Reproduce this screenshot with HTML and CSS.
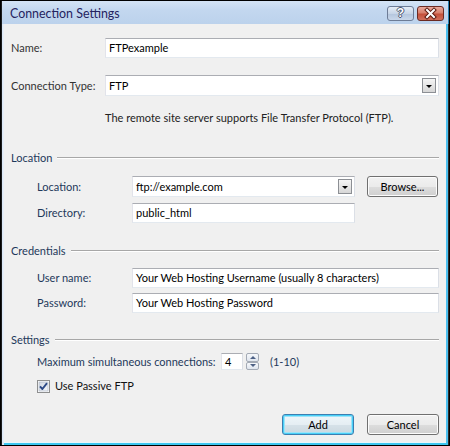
FILE: index.html
```html
<!DOCTYPE html>
<html>
<head>
<meta charset="utf-8">
<title>Connection Settings</title>
<link rel="stylesheet" href="styles.css">
</head>
<body>
<div class="window">
  <div class="titlebar">
    <span class="title">Connection Settings</span>
    <div class="caption-btns">
      <span class="cbtn help">?</span>
      <span class="cbtn close">
        <svg width="25" height="13" viewBox="0 0 25 13">
          <path d="M9 3 L16 10 M16 3 L9 10" stroke="#5a1a10" stroke-width="4" stroke-linecap="square" fill="none"/>
          <path d="M9 3 L16 10 M16 3 L9 10" stroke="#ffffff" stroke-width="2" stroke-linecap="square" fill="none"/>
        </svg>
      </span>
    </div>
  </div>
  <div class="body">
    <div class="client">
      <div class="row top-row">
        <span class="lbl top-lbl">Name:</span>
        <div class="field grow">FTPexample</div>
      </div>
      <div class="row top-row type-row">
        <span class="lbl top-lbl">Connection Type:</span>
        <div class="field combo grow">
          <span>FTP</span>
          <span class="drop"><span class="tri"></span></span>
        </div>
      </div>
      <p class="desc">The remote site server supports File Transfer Protocol (FTP).</p>

      <div class="ghead loc-head">Location</div>
      <div class="row sub-row loc-row">
        <span class="lbl sub-lbl">Location:</span>
        <div class="field combo w223">
          <span>ftp://example.com</span>
          <span class="drop"><span class="tri"></span></span>
        </div>
        <span class="btn browse">Browse...</span>
      </div>
      <div class="row sub-row dir-row">
        <span class="lbl sub-lbl">Directory:</span>
        <div class="field w223">public_html</div>
      </div>

      <div class="ghead cred-head">Credentials</div>
      <div class="row sub-row user-row">
        <span class="lbl sub-lbl">User name:</span>
        <div class="field grow">Your Web Hosting Username (usually 8 characters)</div>
      </div>
      <div class="row sub-row pass-row">
        <span class="lbl sub-lbl">Password:</span>
        <div class="field grow">Your Web Hosting Password</div>
      </div>

      <div class="ghead set-head">Settings</div>
      <div class="row sub-row max-row">
        <span class="lbl sub-lbl max-lbl">Maximum simultaneous connections:</span>
        <div class="field spin-field">4</div>
        <div class="spin">
          <span class="spin-btn"><span class="tri-up"></span></span>
          <span class="spin-btn"><span class="tri-down"></span></span>
        </div>
        <span class="range">(1-10)</span>
      </div>
      <div class="row sub-row chk-row">
        <svg class="chk" width="13" height="13" viewBox="0 0 13 13">
          <defs>
            <linearGradient id="cg" x1="0" y1="0" x2="1" y2="1">
              <stop offset="0" stop-color="#cfd6e0"/>
              <stop offset="1" stop-color="#f6f8fb"/>
            </linearGradient>
          </defs>
          <rect x="0.5" y="0.5" width="12" height="12" fill="#fff" stroke="#8e8f8f"/>
          <rect x="2" y="2" width="9" height="9" fill="url(#cg)" stroke="#a9b3c2" stroke-width="0.6"/>
          <path d="M3 6.3 L5.4 9 L10 3.2" stroke="#2d4a86" stroke-width="1.9" fill="none" stroke-linejoin="round"/>
        </svg>
        <span class="chk-lbl">Use Passive FTP</span>
      </div>

      <div class="row btn-row">
        <span class="btn default">Add</span>
        <span class="btn">Cancel</span>
      </div>
    </div>
  </div>
</div>
</body>
</html>
```

FILE: styles.css
```css
html, body {
  margin: 0;
  padding: 0;
  background: #ffffff;
}

body {
  font-family: Lato, "Liberation Sans", sans-serif;
  font-size: 11px;
  color: #000;
}

.window {
  width: 450px;
  height: 446px;
  box-sizing: border-box;
  border: 1px solid #000;
  display: flex;
  flex-direction: column;
  background: #bfd4ed;
}

.titlebar {
  height: 23px;
  flex: none;
  display: flex;
  justify-content: space-between;
  align-items: flex-start;
  padding: 0 4px 0 8px;
  background: linear-gradient(to bottom, #d4e3f5 0%, #c3d7ef 40%, #bcd2ec 100%);
  border-left: 1px solid #1c1c1c;
  border-right: 1px solid #2a7fb0;
}

.title {
  font-size: 12.4px;
  line-height: 14px;
  margin-top: 6px;
  color: #25235f;
}

.caption-btns {
  display: flex;
  gap: 3px;
  margin-top: 5px;
}

.cbtn {
  width: 27px;
  height: 15px;
  box-sizing: border-box;
  border-radius: 3px;
  display: flex;
  align-items: center;
  justify-content: center;
}

.help {
  border: 1px solid #6d7c96;
  background: linear-gradient(to bottom, #e4ecf6 0%, #c7d5e7 50%, #b3c5dd 51%, #c9d7ea 100%);
  color: #fff;
  font-family: "Liberation Sans", sans-serif;
  font-weight: bold;
  font-size: 12px;
  line-height: 13px;
  text-shadow: 1px 0 0 #4a5670, -1px 0 0 #4a5670, 0 1px 0 #4a5670, 0 -1px 0 #4a5670;
}

.close {
  border: 1px solid #6b2a22;
  background: linear-gradient(to bottom, #e9a99b 0%, #d8806c 45%, #c4503a 55%, #d0705c 100%);
}

.body {
  flex: 1;
  display: flex;
  border-left: 1px solid #1c1c1c;
  border-right: 1px solid #2b2b2b;
  padding: 0 0 0 0;
}

.client {
  flex: 1;
  margin: 0 2px 3px 2px;
  background: #f0f0f0;
  padding: 14px 7px 0 7px;
  box-shadow: -1px 0 0 #e6eef8, 0 1px 0 #e8f7fc;
}

.body {
  background: linear-gradient(to right, #dce8f6 0px, #dce8f6 2px, transparent 2px),
              linear-gradient(to top, #3cc6f0 0px, #3cc6f0 2px, transparent 2px),
              linear-gradient(to left, #4cbfee 0px, #4cbfee 2px, #bfd4ed 2px);
}

.row {
  display: flex;
  align-items: center;
}

.lbl {
  flex: none;
  line-height: 14px;
}

.top-lbl {
  width: 94px;
  color: #333;
}

.sub-row {
  padding-left: 26px;
}

.sub-lbl {
  width: 95px;
  color: #1e395b;
}

.field {
  height: 20px;
  box-sizing: border-box;
  border: 1px solid;
  border-color: #abadb3 #dbdfe6 #e3e9ef #e2e3ea;
  background: #fff;
  padding-left: 3px;
  line-height: 18px;
  white-space: nowrap;
  overflow: hidden;
}

.grow {
  flex: 1;
}

.w223 {
  width: 223px;
  flex: none;
}

.combo {
  height: 21px;
  display: flex;
  align-items: center;
  justify-content: space-between;
  padding-right: 2px;
}

.drop {
  width: 14px;
  height: 15px;
  box-sizing: border-box;
  border: 1px solid #8c8f94;
  background: linear-gradient(to bottom, #f5f5f5 0%, #e6e6e6 50%, #d6d6d6 100%);
  display: flex;
  align-items: center;
  justify-content: center;
}

.tri {
  width: 0;
  height: 0;
  border-left: 3px solid transparent;
  border-right: 3px solid transparent;
  border-top: 3px solid #000;
  margin-top: 1px;
}

.type-row {
  margin-top: 17px;
}

.desc {
  margin: 15px 0 0 0;
  padding-left: 94px;
  line-height: 14px;
  color: #222;
}

.ghead {
  display: flex;
  align-items: center;
  height: 14px;
  line-height: 14px;
  color: #1e395b;
}

.ghead::after {
  content: "";
  flex: 1;
  margin-left: 5px;
  border-top: 1px solid #a7a7a7;
  border-bottom: 1px solid #ffffff;
}

.loc-head { margin-top: 26px; }
.loc-row { margin-top: 11px; }
.dir-row { margin-top: 6px; }
.cred-head { margin-top: 21px; }
.user-row { margin-top: 10px; }
.pass-row { margin-top: 5px; }
.set-head { margin-top: 20px; }
.max-row { margin-top: 6px; }
.chk-row { margin-top: 9px; height: 14px; }
.btn-row { margin-top: 21px; justify-content: flex-end; gap: 13px; }

.btn {
  width: 72px;
  height: 21px;
  box-sizing: border-box;
  border: 1px solid #707070;
  border-radius: 3px;
  background: linear-gradient(to bottom, #f2f2f2 0%, #ebebeb 50%, #dddddd 51%, #cfcfcf 100%);
  box-shadow: inset 0 0 0 1px #fcfcfc;
  display: flex;
  align-items: center;
  justify-content: center;
  line-height: 14px;
  color: #000;
}

.browse {
  margin-left: 12px;
  width: 71px;
}

.btn.default {
  border-color: #3c7fb1;
  box-shadow: inset 0 0 0 1px #48d0f8, inset 0 0 0 2px #9fe3f8;
  background: linear-gradient(to bottom, #eef6fa 0%, #e5eef3 50%, #d6e2e9 51%, #cbd8df 100%);
}

.max-lbl {
  width: 184px;
}

.spin-field {
  width: 22px;
  height: 17px;
  line-height: 15px;
  padding-left: 3px;
  flex: none;
}

.spin {
  margin-left: 3px;
  width: 13px;
  height: 17px;
  display: flex;
  flex-direction: column;
}

.spin-btn {
  flex: 1;
  box-sizing: border-box;
  border: 1px solid #a3aab5;
  border-radius: 2px;
  background: linear-gradient(to bottom, #f6f8fb 0%, #dfe5ee 100%);
  display: flex;
  align-items: center;
  justify-content: center;
}

.tri-up {
  width: 0;
  height: 0;
  border-left: 3px solid transparent;
  border-right: 3px solid transparent;
  border-bottom: 3px solid #4d6185;
}

.tri-down {
  width: 0;
  height: 0;
  border-left: 3px solid transparent;
  border-right: 3px solid transparent;
  border-top: 3px solid #4d6185;
}

.range {
  margin-left: 11px;
  color: #1e395b;
  line-height: 14px;
}

.chk {
  flex: none;
  display: block;
}

.chk-lbl {
  margin-left: 5px;
  line-height: 14px;
  color: #111;
}
```
